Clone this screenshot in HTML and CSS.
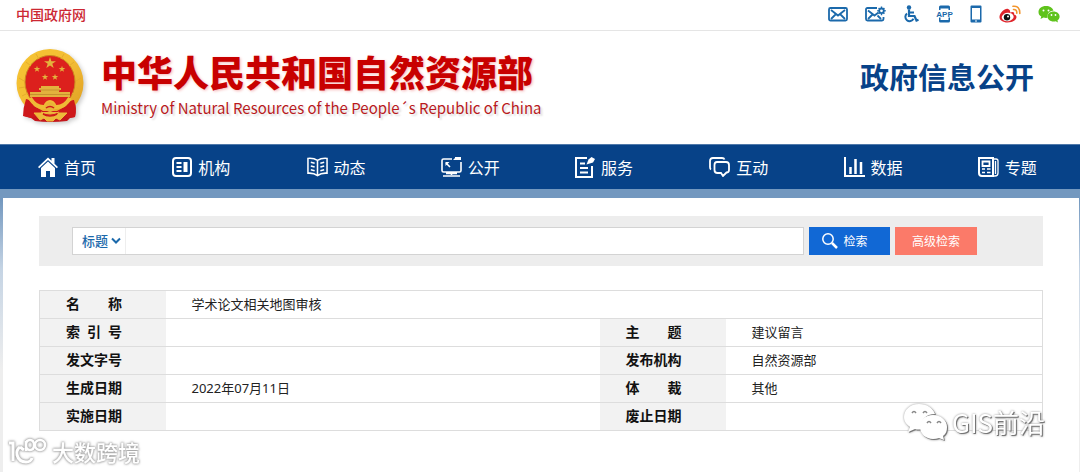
FILE: index.html
```
<!DOCTYPE html>
<html lang="zh-CN">
<head>
  <meta charset="UTF-8">
  <meta name="viewport" content="width=device-width, initial-scale=1.0">
  <title>中华人民共和国自然资源部</title>
  <link rel="stylesheet" href="styles.css">
</head>
<body>

<div class="topbar">
  <a class="gov-link" href="#">中国政府网</a>
  <div class="top-icons">
    <a href="#" aria-label="邮箱">
      <svg width="20" height="16" viewBox="0 0 20 16" fill="none" stroke="#1b69ab" stroke-width="1.8"><rect x="1" y="2" width="18" height="12.5" rx="1.5"/><path d="M3 4l7 5.500 7-5.500M3 13l5-5M17 13l-5-5"/></svg>
    </a>
    <a href="#" aria-label="邮件设置">
      <svg width="21" height="16" viewBox="0 0 21 16" fill="none" stroke="#1b69ab" stroke-width="1.8"><path d="M12 2H2.500Q1 2 1 3.500V13q0 1.500 1.500 1.500H17q1.500 0 1.500-1.500v-2"/><path d="M3 4.500l6.500 5 4-3M3 13l5-5M16 13l-3.500-3.500"/><circle cx="16.500" cy="4.800" r="2.300"/><path d="M16.500 .5v1.500M16.500 7.500v1.800M12.300 4.800h1.500M19.200 4.800h1.500M13.600 1.900l1 1M19.400 1.900l-1 1M13.600 7.700l1-1M19.400 7.700l-1-1" stroke-width="1.400"/></svg>
    </a>
    <a href="#" aria-label="无障碍">
      <svg width="16" height="18" viewBox="0 0 16 18" fill="none" stroke="#1b69ab" stroke-width="2.2"><circle cx="6" cy="2.500" r="2.200" fill="#1b69ab" stroke="none"/><path d="M6 4.500v6.500h5.500l2 4.500 2-.8M6.500 7.500H11"/><path d="M4 8.500a4.300 4.300 0 1 0 6.500 5.300" stroke-width="2"/></svg>
    </a>
    <a href="#" aria-label="APP">
      <svg width="17" height="18" viewBox="0 0 17 18"><path d="M3 5V2q0-1.500 1.500-1.500h8Q14 .5 14 2v3h-1.500V3.500h-8V5zM3 12.500V16q0 1.500 1.500 1.500h8q1.500 0 1.500-1.500v-3.500h-1.500V15h-8v-2.500z" fill="#1b69ab"/><text x="8.500" y="12" text-anchor="middle" class="app-text">APP</text></svg>
    </a>
    <a href="#" aria-label="手机版">
      <svg width="12" height="18" viewBox="0 0 12 18"><path fill-rule="evenodd" d="M1.500 .5h9q1 0 1 1v15q0 1-1 1h-9q-1 0-1-1v-15q0-1 1-1zM2 3v11.500h8V3zM5 15.500v1h2v-1z" fill="#1b69ab"/></svg>
    </a>
    <a href="#" aria-label="微博">
      <svg width="22" height="18" viewBox="0 0 22 18"><path d="M9 4c-3-1-8 4-8.500 7.500C0 15 4 17.500 8.500 17.500c5.500 0 9-2.800 9-5.500 0-1.700-1.300-2.300-2.500-2.600.8-2-.5-3.200-4-1.900C11.500 5.500 10.500 4.500 9 4z" fill="#df242b"/><ellipse cx="8.700" cy="12" rx="6" ry="4.200" fill="#fff" transform="rotate(-8 8.700 12)"/><circle cx="8" cy="12.300" r="3.200" fill="#111"/><circle cx="9" cy="11.500" r="1" fill="#fff"/><path d="M14.500 4.500q3.500-.3 3.300 3.800M14 1.300q7-.7 6.800 7.200" fill="none" stroke="#f2952d" stroke-width="1.600" stroke-linecap="round"/></svg>
    </a>
    <a href="#" aria-label="微信">
      <svg width="22" height="18" viewBox="0 0 22 18"><path d="M8 1C3.500 1 .5 3.600.5 7c0 2 1 3.500 2.800 4.600L2.500 14l3-1.500c1.600.5 3 .4 4 .3C9 8 12 5.700 15.500 5.800 14.700 2.800 11.700 1 8 1z" fill="#5fc31c"/><path d="M15.500 6.500c-3.500 0-6 2.300-6 5s2.500 5 6 5c.8 0 1.500-.1 2.200-.3l2.300 1.300-.6-2c1.400-1 2.200-2.300 2.200-4 0-2.700-2.600-5-6.100-5z" fill="#5fc31c"/><g fill="#fff"><circle cx="5.500" cy="5.500" r="1"/><circle cx="10.500" cy="5.500" r="1"/><circle cx="13.500" cy="10" r=".9"/><circle cx="17.500" cy="10" r=".9"/></g></svg>
    </a>
  </div>
</div>

<header class="header">
  <svg class="emblem" width="72" height="76" viewBox="0 0 72 76">
    <defs>
      <linearGradient id="gold" x1="0" y1="0" x2="1" y2="1">
        <stop offset="0" stop-color="#f6c431"/>
        <stop offset=".5" stop-color="#f3bd35"/>
        <stop offset="1" stop-color="#dc9b20"/>
      </linearGradient>
      <path id="star" d="M0-6l1.400 4.200H6L2.300.8 3.700 5 0 2.500-3.700 5-2.300.8-6-1.800h4.600z"/>
    </defs>
    <path d="M10 50q-1 8-2 18l7 2 4 3q15 2 32 0l3-3 5-1q2-9-1-19z" fill="#c5161b"/>
    <ellipse cx="34" cy="35" rx="33.500" ry="34" fill="url(#gold)"/>
    <ellipse cx="34" cy="34" rx="25" ry="26.500" fill="#dc201d" stroke="#ca8720" stroke-width="1"/>
    <path d="M3 30l5 3M3 40l6-1M6 48l6-3M65 30l-5 3M65 41l-6-2M62 49l-6-4M10 14l5 4M58 14l-5 4M20 6l3 5M48 6l-3 5" stroke="#e5ac2c" stroke-width="1"/>
    <g fill="#e3b23d">
      <use href="#star" x="34" y="15"/>
      <use href="#star" transform="translate(21 21) scale(.55)"/>
      <use href="#star" transform="translate(46 21) scale(.55)"/>
      <use href="#star" transform="translate(29 29) scale(.55)"/>
      <use href="#star" transform="translate(39 29) scale(.55)"/>
      <path d="M25 38h18v2h2v2h-2v2h11v5H14v-5h11v-2h-2v-2h2z"/>
    </g>
    <path d="M24 42h20M14 46.500h40" stroke="#c8912e" stroke-width="1"/>
    <path d="M10 51q4 0 8 7l9 5h14l9-5q5-7 8-6 3 10 1 17l-6 1-10-4q-9 5-19 0l-9 4-8-2q0-8 3-17z" fill="#ce181b"/>
    <path d="M14 50q6 10 15 9 2-5 5-5t5 5q9 1 15-9" fill="none" stroke="#efbb36" stroke-width="4"/>
    <circle cx="34" cy="59" r="5" fill="#e9b338"/>
    <path d="M25 64q9 4 18 0M18 65l6 7 6-3-4-4zM51 65l-7 7-6-3 5-4zM28 70q6-4 12 0l-3 3h-6z" fill="#edb93a" stroke="#edb93a"/>
    <path d="M30 60q4-3 8 0M27 66q7 4 14 0" fill="none" stroke="#cf1a1b" stroke-width="1.500"/>
  </svg>
  <div class="site-name">
    <h1>中华人民共和国自然资源部</h1>
    <p>Ministry of Natural Resources of the People´s Republic of China</p>
  </div>
  <h2 class="section-name">政府信息公开</h2>
</header>

<nav class="nav">
  <ul>
    <li><a href="#">
      <svg width="20" height="20" viewBox="0 0 20 20" fill="#fff"><path d="M0 10L10 .5l3.500 3.300V1h3v5.800L20 10l-1.200 1.200L10 3 1.200 11.200z"/><path d="M3 11l7-6.500 7 6.500v9h-5v-6H8v6H3z"/></svg>
      首页</a></li>
    <li><a href="#">
      <svg width="20" height="20" viewBox="0 0 20 20" fill="none" stroke="#fff" stroke-width="2"><rect x="1" y="1" width="18" height="18" rx="3"/><path d="M4.500 6h5M4.500 10h5M4.500 14h5"/><path d="M11.500 5h4v10h-4z" fill="#fff" stroke="none"/></svg>
      机构</a></li>
    <li><a href="#">
      <svg width="21" height="20" viewBox="0 0 22 20" fill="none" stroke="#fff" stroke-width="1.600"><path d="M11 3Q7 .5 1 1v15.500q6-.5 10 2.500 4-3 10-2.500V1Q15 .5 11 3zv16M4 5l4 1M4 9l4 1M4 13l4 1M18 5l-4 1M18 9l-4 1M18 13l-4 1"/></svg>
      动态</a></li>
    <li><a href="#">
      <svg width="21" height="20" viewBox="0 0 21 20" fill="none" stroke="#fff" stroke-width="1.600"><path d="M11 2H2.500Q1 2 1 3.500v10Q1 15 2.500 15h16q1.500 0 1.500-1.500V5M10.500 15v3M5 16.500h11M2 19h17M5 6l4 4"/><path d="M4.500 5h4l-4 4zM14 0h6v3h-8l2-2z" fill="#fff" stroke="none"/></svg>
      公开</a></li>
    <li><a href="#">
      <svg width="20" height="22" viewBox="0 0 20 22" fill="none" stroke="#fff" stroke-width="2"><path d="M12 2H1v19h16V10M5 7.500h5M5 12h8M5 16.500h8"/><path d="M11.500 8.500l2-5 3-2.500L20 3l-2 3.500z" fill="#fff" stroke="none"/></svg>
      服务</a></li>
    <li><a href="#">
      <svg width="21" height="20" viewBox="0 0 21 20" fill="none" stroke="#fff" stroke-width="1.800"><path d="M2 12.500Q1 12 1 10V4q0-3 3-3h9q2 0 2.500 1.500"/><path d="M8 5h9q3 0 3 3v5q0 2.500-2.500 2.500L14 19l-2-3H8.500Q5.500 16 5.500 13V8q0-3 2.500-3z"/></svg>
      互动</a></li>
    <li><a href="#">
      <svg width="21" height="20" viewBox="0 0 21 20" fill="none" stroke="#fff"><path d="M1 0v19h20" stroke-width="2"/><path d="M6.500 10v7M11.500 2v15M17 5v12" stroke-width="2.500"/></svg>
      数据</a></li>
    <li><a href="#">
      <svg width="21" height="20" viewBox="0 0 21 20" fill="none" stroke="#fff"><path d="M1 1h14v18H4q-3 0-3-3z" stroke-width="2"/><path d="M15 2h3q2 0 2 2v12q0 3-3 3h-3M17.500 4v13" stroke-width="1.300"/><path d="M4.500 4.500h7V9h-7z" stroke-width="1.800"/><path d="M4 12h3M4 15.500h3M9 12h3.500M9 15.500h3.500" stroke-width="1.500"/></svg>
      专题</a></li>
  </ul>
</nav>

<div class="page">
  <main class="content">
    <form class="search">
      <div class="search-field">
        <div class="select-wrap">
          <select aria-label="检索范围">
            <option>标题</option>
          </select>
          <svg class="chevron" width="10" height="8" viewBox="0 0 10 8" fill="none" stroke="#1b69ab" stroke-width="2"><path d="M1 1.500l4 4 4-4"/></svg>
        </div>
        <input type="text" aria-label="检索内容">
      </div>
      <button type="submit" class="btn btn-search">
        <svg width="16" height="16" viewBox="0 0 16 16" fill="none" stroke="#fff"><circle cx="6" cy="6" r="5.200" stroke-width="1.500"/><path d="M10 10l5 5" stroke-width="2.500"/></svg>
        检索</button>
      <button type="button" class="btn btn-advanced">高级检索</button>
    </form>

    <table class="info">
      <colgroup>
        <col class="col-label">
        <col class="col-wide">
        <col class="col-label">
        <col>
      </colgroup>
      <tr>
        <th scope="row">名&emsp;&emsp;称</th>
        <td colspan="3">学术论文相关地图审核</td>
      </tr>
      <tr>
        <th scope="row">索&ensp;引&ensp;号</th>
        <td></td>
        <th scope="row">主&emsp;&emsp;题</th>
        <td>建议留言</td>
      </tr>
      <tr>
        <th scope="row">发文字号</th>
        <td></td>
        <th scope="row">发布机构</th>
        <td>自然资源部</td>
      </tr>
      <tr>
        <th scope="row">生成日期</th>
        <td>2022年07月11日</td>
        <th scope="row">体&emsp;&emsp;裁</th>
        <td>其他</td>
      </tr>
      <tr>
        <th scope="row">实施日期</th>
        <td></td>
        <th scope="row">废止日期</th>
        <td></td>
      </tr>
    </table>
  </main>
</div>

<div class="mark mark-left">
  <svg width="40" height="28" viewBox="0 0 40 28" fill="none" stroke="#fff" stroke-width="3"><path d="M1 5h4v18M12 9q-4 3-3 8 2 7 9 7 5 0 6-4M12 9l4 3"/><path d="M18 13V3M18 7q0-5 4-5t4 5-4 5-4-5z" stroke-width="2.500"/><circle cx="32" cy="7" r="5" stroke-width="2.500"/></svg>
  大数跨境
</div>
<div class="mark mark-right">
  <svg width="46" height="40" viewBox="0 0 46 40" fill="#fff"><path d="M17 2C8 2 2 8 2 15c0 5 3 8 6 10l-2 5 7-3q3 1 6 0c-1-9 5-15 14-15C31 6 25 2 17 2z"/><path d="M31 13c-8 0-13 5-13 12s6 12 13 12q3 0 6-1l5 2-1-4c3-2 4-5 4-9 0-7-6-12-14-12z"/><path d="M10 11q2-3 4 0M21 11q2-3 4 0M25 21q2-3 4 0M35 21q2-3 4 0" fill="none" stroke="#888" stroke-width="1.500"/></svg>
  GIS前沿
</div>

</body>
</html>
```
FILE: styles.css
```
* {
  box-sizing: border-box;
}

body {
  margin: 0;
  min-height: 100vh;
  display: flex;
  flex-direction: column;
  position: relative;
  overflow-x: hidden;
  font-family: "Noto Sans", "Noto Sans CJK SC", sans-serif;
  font-size: 13px;
  color: #222;
  background-color: #fff;
}

a {
  text-decoration: none;
}

svg {
  display: block;
  flex: none;
}

.topbar {
  display: flex;
  align-items: center;
  justify-content: space-between;
  height: 31px;
  padding: 0 20px 3px 16px;
  border-bottom: 1px solid #e5e5e5;
}

.gov-link {
  font-size: 14px;
  font-weight: 500;
  color: #cc2733;
}

.top-icons {
  display: flex;
  align-items: center;
  gap: 17px;
}

.app-text {
  font-family: "Liberation Sans", sans-serif;
  font-size: 8px;
  font-weight: bold;
  fill: #1b69ab;
}

.header {
  display: flex;
  align-items: center;
  height: 113px;
  padding: 0 46px 3px 16px;
}

.emblem {
  filter: drop-shadow(2px 2px 2px #ccc);
}

.site-name {
  margin-left: 13px;
  color: #c80000;
}

.site-name h1 {
  margin: 0;
  font-size: 36px;
  line-height: 44px;
  font-weight: 900;
  text-shadow: 1px 1px 3px #f5b5b5;
}

.site-name p {
  margin: 0;
  font-family: "Noto Sans CJK SC", sans-serif;
  font-size: 15px;
  line-height: 24px;
  color: #b91a1d;
  text-shadow: 2px 2px 2px #ddd;
}

.section-name {
  margin: 0 0 16px auto;
  font-size: 29px;
  line-height: 40px;
  color: #074288;
}

.nav {
  background-color: #074288;
  border-top: 1px solid #5079aa;
}

.nav ul {
  display: flex;
  margin: 0 3px;
  padding: 0;
  list-style: none;
}

.nav li {
  flex: 1;
}

.nav a {
  display: flex;
  align-items: center;
  gap: 6px;
  height: 44px;
  padding-left: 35px;
  font-size: 16px;
  color: #fff;
}

.page {
  flex: 1;
  display: flex;
  padding: 9px 1px 0 3px;
  background: linear-gradient(#7398bf, #7398bf 10px, #c5d4e4 80px, #eee 180px);
}

.content {
  flex: 1;
  padding: 18px 36px 40px;
  background-color: #fff;
}

.search {
  display: flex;
  align-items: center;
  gap: 5px;
  height: 50px;
  padding: 0 66px 0 33px;
  background-color: #ededed;
}

.search-field {
  flex: 1;
  display: flex;
  height: 28px;
  border: 1px solid #d3d3d3;
  background-color: #fff;
}

.select-wrap {
  position: relative;
  width: 53px;
  border-right: 1px solid #eee;
}

.select-wrap select {
  width: 100%;
  height: 100%;
  padding: 0 0 0 9px;
  border: none;
  background: none;
  appearance: none;
  font-family: inherit;
  font-size: 13px;
  font-weight: 500;
  color: #1b69ab;
}

.chevron {
  position: absolute;
  right: 4px;
  top: 9px;
  pointer-events: none;
}

.search-field input {
  flex: 1;
  padding: 0 8px;
  border: none;
  font-size: 13px;
}

.btn {
  display: flex;
  align-items: center;
  justify-content: center;
  gap: 5px;
  height: 28px;
  padding: 0 16px;
  border: none;
  font-family: inherit;
  font-size: 12px;
  color: #fff;
  cursor: pointer;
}

.btn-search {
  width: 81px;
  padding: 0 22px 0 13px;
  background-color: #1168d5;
}

.btn-advanced {
  width: 82px;
  background-color: #fb7a69;
}

.info {
  width: 100%;
  margin-top: 24px;
  border: 1px solid #ddd;
  border-collapse: collapse;
  table-layout: fixed;
}

.col-label {
  width: 126px;
}

.col-wide {
  width: 434px;
}

.info tr {
  height: 28px;
  border-bottom: 1px solid #ddd;
}

.info th,
.info td {
  padding: 0 0 2px 26px;
  line-height: 20px;
  text-align: left;
}

.info th {
  font-size: 14px;
  color: #111;
  background-color: #f2f2f2;
}

/* watermarks lie over the page */
.mark {
  position: absolute;
  display: flex;
  align-items: center;
  color: #fff;
}

.mark-left {
  left: 8px;
  bottom: 4px;
  gap: 4px;
  font-size: 22px;
  line-height: 32px;
  font-weight: 500;
  filter: drop-shadow(0 0 1px #999) drop-shadow(0 0 1px #bbb);
}

.mark-right {
  right: 35px;
  bottom: 30px;
  gap: 4px;
  font-family: "Noto Sans CJK SC", sans-serif;
  font-size: 26px;
  line-height: 40px;
  filter: drop-shadow(1px 1px 0 #777) drop-shadow(0 0 1px #999);
}
```
